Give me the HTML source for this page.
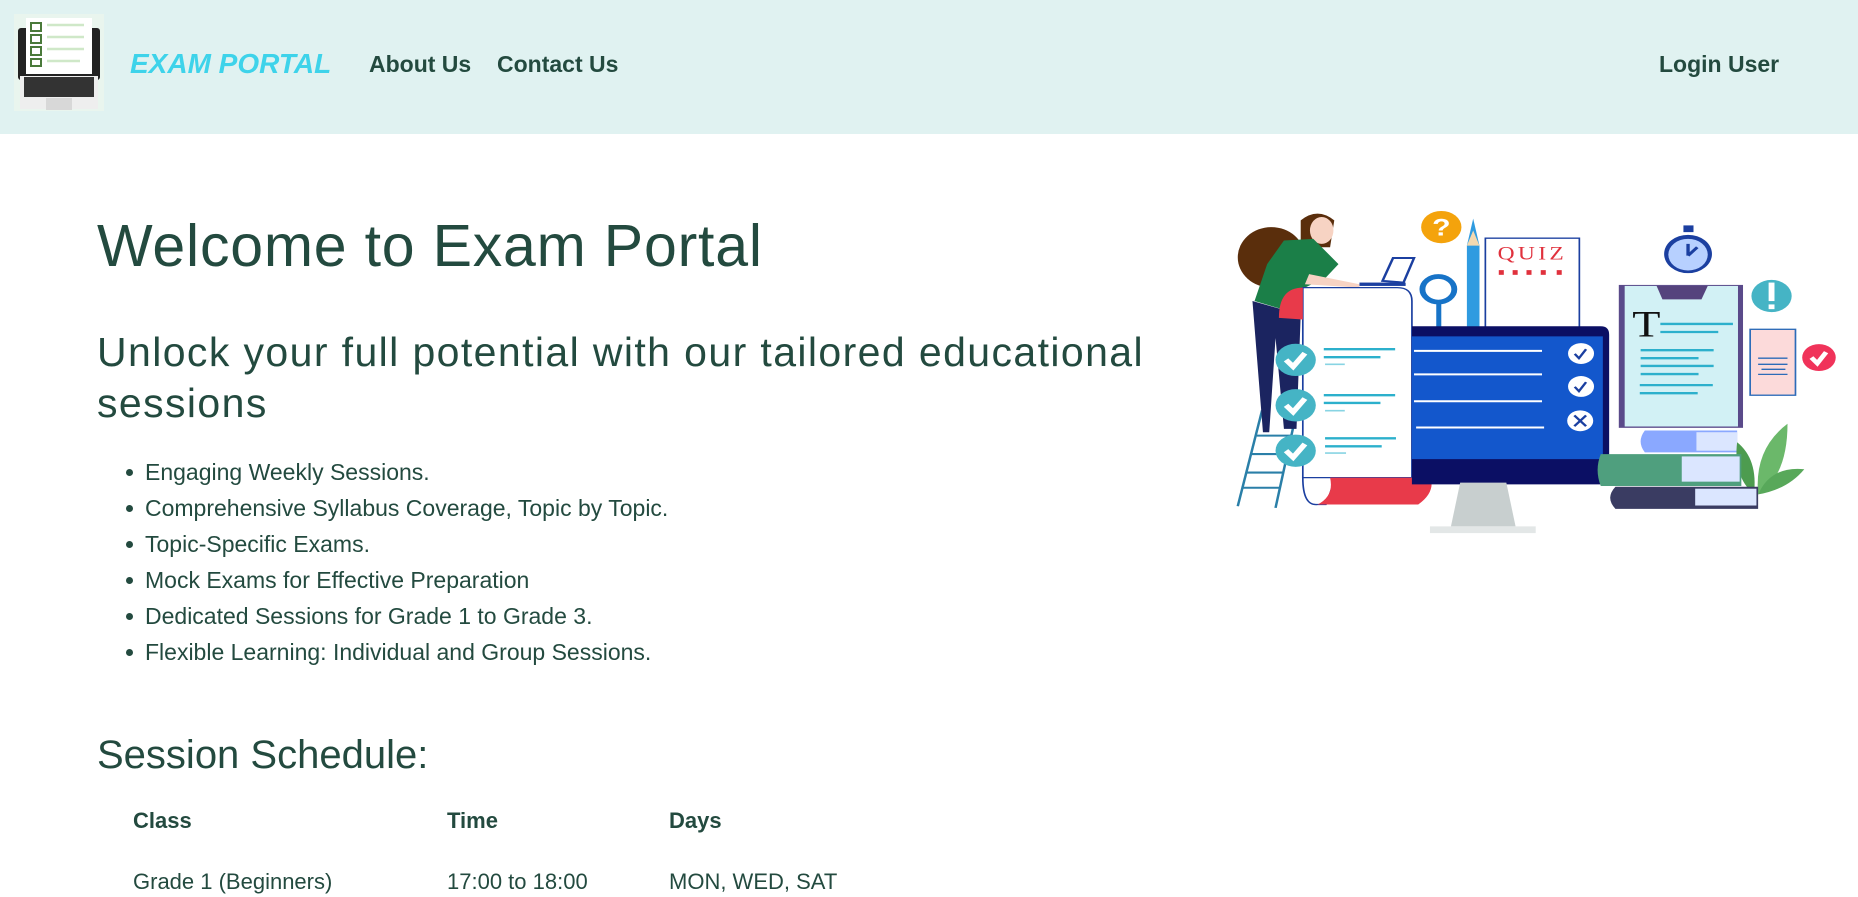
<!DOCTYPE html>
<html><head><meta charset="utf-8"><style>
*{margin:0;padding:0;box-sizing:border-box}
body{width:1858px;height:893px;overflow:hidden;background:#fff;font-family:"Liberation Sans",sans-serif;color:#234a3f;position:relative}
.nav{position:absolute;left:0;top:0;width:1858px;height:134px;background:#e0f2f1}
.a{position:absolute;white-space:nowrap}
.n{font-size:23px;font-weight:bold;line-height:30px;top:49px;color:#234a3f}
ul{list-style:none}
li{position:relative;height:36px;line-height:36px;font-size:23px;padding-left:19px}
li:before{content:"";position:absolute;left:0;top:15px;width:7px;height:7px;border-radius:50%;background:#234a3f}
.th{font-size:22px;font-weight:bold;line-height:30px;top:806px}
.td{font-size:22px;line-height:30px;top:867px}
</style></head><body>
<div class="nav">
 <svg class="a" style="left:14px;top:14px" width="90" height="97" viewBox="0 0 90 97">
  <rect x="0" y="0" width="90" height="97" fill="#e9f5ee"/>
  <rect x="4" y="14" width="82" height="52" rx="3" fill="#222"/>
  <rect x="12" y="4" width="66" height="56" fill="#fff"/>
  <g fill="none" stroke="#4a7a3a" stroke-width="2"><rect x="17" y="9" width="10" height="8"/><rect x="17" y="21" width="10" height="8"/><rect x="17" y="33" width="10" height="8"/><rect x="17" y="45" width="10" height="7"/></g>
  <g stroke="#cfe8c8" stroke-width="2.5"><line x1="33" y1="11" x2="70" y2="11"/><line x1="33" y1="23" x2="70" y2="23"/><line x1="33" y1="35" x2="70" y2="35"/><line x1="33" y1="47" x2="66" y2="47"/></g>
  <rect x="6" y="62" width="78" height="33" fill="#eee"/>
  <rect x="10" y="63" width="70" height="20" fill="#333"/>
  <rect x="32" y="84" width="26" height="12" fill="#d8d8d8"/>
 </svg>
 <div class="a" style="left:130px;top:47px;font-size:28px;font-style:italic;font-weight:bold;color:#3ed3ea;line-height:34px">EXAM PORTAL</div>
 <div class="a n" style="left:369px">About Us</div>
 <div class="a n" style="left:497px">Contact Us</div>
 <div class="a n" style="left:1659px">Login User</div>
</div>
<div class="a" style="left:97px;top:217px;font-size:59px;line-height:59px;letter-spacing:0.8px">Welcome to Exam Portal</div>
<div class="a" style="left:97px;top:327px;width:1160px;font-size:41px;line-height:51px;white-space:normal;letter-spacing:1.4px">Unlock your full potential with our tailored educational<br>sessions</div>
<ul class="a" style="left:126px;top:454px">
<li>Engaging Weekly Sessions.</li>
<li>Comprehensive Syllabus Coverage, Topic by Topic.</li>
<li>Topic-Specific Exams.</li>
<li>Mock Exams for Effective Preparation</li>
<li>Dedicated Sessions for Grade 1 to Grade 3.</li>
<li>Flexible Learning: Individual and Group Sessions.</li>
</ul>
<div class="a" style="left:97px;top:734px;font-size:40px;line-height:42px">Session Schedule:</div>
<div class="a th" style="left:133px">Class</div>
<div class="a th" style="left:447px">Time</div>
<div class="a th" style="left:669px">Days</div>
<div class="a td" style="left:133px">Grade 1 (Beginners)</div>
<div class="a td" style="left:447px">17:00 to 18:00</div>
<div class="a td" style="left:669px">MON, WED, SAT</div>

<svg class="a" style="left:1200px;top:180px" width="658" height="380" viewBox="0 0 1568 1130" preserveAspectRatio="none">
 <g stroke="#2a7fa8" stroke-width="6"><line x1="148" y1="685" x2="90" y2="970"/><line x1="230" y1="690" x2="180" y2="975"/>
 <line x1="135" y1="760" x2="220" y2="760"/><line x1="120" y1="815" x2="210" y2="815"/><line x1="110" y1="870" x2="200" y2="870"/><line x1="100" y1="915" x2="190" y2="915"/></g>
 <ellipse cx="170" cy="230" rx="80" ry="90" fill="#5a2e0c"/>
 <path d="M240 120 Q280 80 320 120 L310 200 L240 200Z" fill="#5a2e0c"/>
 <ellipse cx="290" cy="150" rx="28" ry="40" fill="#f7d3c3"/>
 <path d="M200 180 L270 175 L330 250 L300 290 L250 320 L240 400 L130 360 L160 250Z" fill="#1b7f48"/>
 <path d="M260 280 L380 310 L380 320 L250 310Z" fill="#f7d3c3"/>
 <path d="M125 360 L240 400 L230 740 L200 740 L180 470 L165 750 L150 750Z" fill="#1b2460"/>
 <path d="M435 300 L460 232 L510 232 L485 305Z" fill="#fff" stroke="#1b3fa0" stroke-width="6"/>
 <rect x="380" y="305" width="110" height="10" fill="#1b3fa0"/>
 <path d="M245 320 L470 320 Q505 320 505 360 L505 885 L245 885Z" fill="#fff" stroke="#1b3fa0" stroke-width="4"/>
 <path d="M245 885 Q245 970 280 965 L300 965 Q320 900 320 885Z" fill="#fff" stroke="#1b3fa0" stroke-width="4"/>
 <path d="M310 885 L550 885 Q560 930 520 965 L280 965 Q320 940 310 885Z" fill="#e83a4a"/>
 <path d="M188 410 Q188 320 245 320 L245 415Z" fill="#e83a4a"/>
 <g fill="#45b4c5"><circle cx="228" cy="535" r="48"/><circle cx="228" cy="670" r="48"/><circle cx="228" cy="805" r="48"/></g>
 <g stroke="#fff" stroke-width="14" fill="none"><path d="M205 535 L222 555 L250 515"/><path d="M205 670 L222 690 L250 650"/><path d="M205 805 L222 825 L250 785"/></g>
 <g stroke="#2cb0cc" stroke-width="7"><line x1="295" y1="503" x2="465" y2="503"/><line x1="295" y1="527" x2="430" y2="527"/><line x1="295" y1="640" x2="465" y2="640"/><line x1="295" y1="663" x2="430" y2="663"/><line x1="298" y1="768" x2="467" y2="768"/><line x1="298" y1="792" x2="433" y2="792"/></g>
 <g stroke="#88d4e3" stroke-width="5"><line x1="298" y1="548" x2="345" y2="548"/><line x1="298" y1="686" x2="345" y2="686"/><line x1="298" y1="812" x2="348" y2="812"/></g>
 <circle cx="575" cy="140" r="48" fill="#f4a30c"/>
 <text x="575" y="165" font-size="72" font-weight="bold" fill="#fff" text-anchor="middle" font-family="Liberation Sans">?</text>
 <path d="M636 195 L651 115 L666 195 L666 440 L636 440Z" fill="#2f9be0"/>
 <path d="M636 195 L651 150 L666 195Z" fill="#f3d9b0"/>
 <circle cx="568" cy="325" r="38" fill="none" stroke="#1773c7" stroke-width="14"/>
 <rect x="563" y="360" width="12" height="80" fill="#1773c7"/>
 <rect x="680" y="173" width="224" height="270" fill="#fff" stroke="#1b3fa0" stroke-width="4"/>
 <text x="792" y="237" font-size="56" fill="#e0313d" text-anchor="middle" font-family="Liberation Serif" letter-spacing="8">QUIZ</text>
 <g fill="#e0313d"><rect x="712" y="268" width="12" height="14"/><rect x="745" y="268" width="12" height="14"/><rect x="778" y="268" width="12" height="14"/><rect x="812" y="268" width="12" height="14"/><rect x="850" y="268" width="12" height="14"/></g>
 <path d="M505 435 L955 435 Q975 435 975 460 L975 905 L505 905Z" fill="#0b0f64"/>
 <rect x="505" y="465" width="455" height="365" fill="#1357cc"/>
 <g stroke="#fff" stroke-width="6"><line x1="510" y1="508" x2="815" y2="508"/><line x1="510" y1="578" x2="815" y2="578"/><line x1="510" y1="658" x2="815" y2="658"/><line x1="515" y1="736" x2="820" y2="736"/></g>
 <g fill="#fff"><circle cx="908" cy="516" r="31"/><circle cx="908" cy="614" r="31"/><circle cx="906" cy="716" r="31"/></g>
 <g stroke="#1b3fa0" stroke-width="6" fill="none"><path d="M893 517 L903 530 L920 503"/><path d="M893 615 L903 628 L920 601"/><path d="M892 700 L920 732 M920 700 L892 732"/></g>
 <path d="M620 900 L730 900 L752 1030 L598 1030Z" fill="#c8cfcf"/>
 <rect x="548" y="1030" width="252" height="20" fill="#e3e7e7"/>
 <circle cx="1163" cy="220" r="57" fill="#1b3fa0"/><circle cx="1163" cy="222" r="47" fill="#b7d0ff"/>
 <rect x="1152" y="135" width="24" height="20" fill="#1b3fa0"/>
 <path d="M1163 225 L1163 190 M1163 225 L1185 200" stroke="#1b3fa0" stroke-width="8"/>
 <rect x="998" y="312" width="296" height="425" fill="#5a4a8a"/>
 <rect x="1012" y="315" width="270" height="418" fill="#d2f1f5"/>
 <path d="M1088 315 L1210 315 L1195 355 L1102 355Z" fill="#55437d"/>
 <text x="1030" y="465" font-size="110" fill="#111" font-family="Liberation Serif">T</text>
 <g stroke="#2cb0cc" stroke-width="7"><line x1="1097" y1="428" x2="1270" y2="428"/><line x1="1097" y1="452" x2="1235" y2="452"/><line x1="1050" y1="506" x2="1224" y2="506"/><line x1="1050" y1="530" x2="1188" y2="530"/><line x1="1050" y1="553" x2="1224" y2="553"/><line x1="1050" y1="577" x2="1188" y2="577"/><line x1="1048" y1="610" x2="1222" y2="610"/><line x1="1048" y1="634" x2="1186" y2="634"/></g>
 <circle cx="1362" cy="345" r="48" fill="#45b4c5"/>
 <rect x="1355" y="305" width="14" height="55" fill="#fff"/><rect x="1355" y="370" width="14" height="14" fill="#fff"/>
 <rect x="1311" y="444" width="108" height="196" fill="#fcdada" stroke="#2d6bb8" stroke-width="4"/>
 <g stroke="#2d6bb8" stroke-width="4"><line x1="1330" y1="530" x2="1400" y2="530"/><line x1="1330" y1="548" x2="1400" y2="548"/><line x1="1338" y1="563" x2="1395" y2="563"/><line x1="1330" y1="578" x2="1400" y2="578"/></g>
 <circle cx="1475" cy="528" r="40" fill="#f0335a"/>
 <path d="M1457 528 L1471 545 L1492 512" stroke="#fff" stroke-width="12" fill="none"/>
 <path d="M1060 745 L1280 745 L1280 810 L1060 810 Q1040 778 1060 745Z" fill="#8aa8ff"/>
 <rect x="1183" y="750" width="97" height="55" fill="#dbe6ff"/>
 <path d="M1400 725 Q1320 800 1330 935 Q1400 880 1400 725Z" fill="#6bb86a"/>
 <path d="M1440 860 Q1360 850 1330 935 Q1400 920 1440 860Z" fill="#58a85a"/>
 <path d="M1280 780 Q1330 830 1320 935 Q1270 880 1280 780Z" fill="#4d9c4f"/>
 <path d="M955 815 L1290 815 L1290 910 L955 910 Q940 862 955 815Z" fill="#4f9f7e"/>
 <rect x="1148" y="822" width="138" height="75" fill="#dbe6ff"/>
 <path d="M990 912 L1330 912 L1330 978 L990 978 Q965 945 990 912Z" fill="#3a3c62"/>
 <rect x="1180" y="918" width="146" height="50" fill="#dbe6ff"/>
</svg>
</body></html>
